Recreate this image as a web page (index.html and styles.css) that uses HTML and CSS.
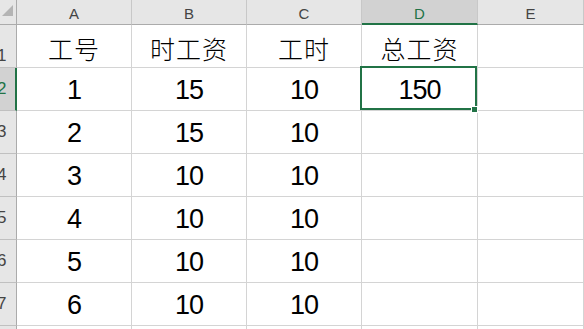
FILE: index.html
```html
<!DOCTYPE html>
<html lang="zh">
<head>
<meta charset="utf-8">
<title>Sheet</title>
<link rel="stylesheet" href="styles.css">
</head>
<body>
<div class="sheet">
  <div class="corner"><span class="tri"></span></div>
  <div class="ch">A</div>
  <div class="ch">B</div>
  <div class="ch">C</div>
  <div class="ch ch-sel">D</div>
  <div class="ch">E</div>

  <div class="rh rh-first"><span>1</span></div>
  <div class="c zh">工号</div>
  <div class="c zh">时工资</div>
  <div class="c zh">工时</div>
  <div class="c zh">总工资</div>
  <div class="c"></div>

  <div class="rh rh-sel"><span>2</span></div>
  <div class="c num">1</div>
  <div class="c num">15</div>
  <div class="c num">10</div>
  <div class="c num active">150<span class="sel"></span><span class="handle"></span></div>
  <div class="c"></div>

  <div class="rh"><span>3</span></div>
  <div class="c num">2</div>
  <div class="c num">15</div>
  <div class="c num">10</div>
  <div class="c"></div>
  <div class="c"></div>

  <div class="rh"><span>4</span></div>
  <div class="c num">3</div>
  <div class="c num">10</div>
  <div class="c num">10</div>
  <div class="c"></div>
  <div class="c"></div>

  <div class="rh"><span>5</span></div>
  <div class="c num">4</div>
  <div class="c num">10</div>
  <div class="c num">10</div>
  <div class="c"></div>
  <div class="c"></div>

  <div class="rh"><span>6</span></div>
  <div class="c num">5</div>
  <div class="c num">10</div>
  <div class="c num">10</div>
  <div class="c"></div>
  <div class="c"></div>

  <div class="rh"><span>7</span></div>
  <div class="c num">6</div>
  <div class="c num">10</div>
  <div class="c num">10</div>
  <div class="c"></div>
  <div class="c"></div>

  <div class="rh"><span>8</span></div>
  <div class="c"></div>
  <div class="c"></div>
  <div class="c"></div>
  <div class="c"></div>
  <div class="c"></div>
</div>
</body>
</html>
```

FILE: styles.css
```css
html, body {
  margin: 0;
  padding: 0;
  background: #ffffff;
  overflow: hidden;
}

.sheet {
  display: grid;
  grid-template-columns: 17px 115px 115px 115px 116px 1fr;
  grid-template-rows: 25px repeat(8, 43px);
  width: 584px;
  font-family: "Liberation Sans", "Noto Sans CJK SC", sans-serif;
  color: #000;
}

.sheet > div {
  box-sizing: border-box;
}

.corner {
  background: #e6e6e6;
  border-right: 1px solid #ababab;
  border-bottom: 1px solid #ababab;
  display: flex;
  align-items: flex-end;
  justify-content: flex-end;
  padding: 0 3px 8px 0;
}

.tri {
  width: 11px;
  height: 11px;
  background: #b4b4b4;
  clip-path: polygon(100% 0, 100% 100%, 0 100%);
}

.ch {
  background: #e6e6e6;
  border-right: 1px solid #c8c8c8;
  border-bottom: 1px solid #ababab;
  display: flex;
  align-items: center;
  justify-content: center;
  padding-top: 3px;
  font-size: 15px;
  color: #444;
}

.ch-sel {
  background: #d2d2d2;
  color: #217346;
  border-bottom: 2px solid #217346;
  padding-top: 4px;
}

.rh {
  background: #e6e6e6;
  border-right: 1px solid #ababab;
  border-bottom: 1px solid #c0c0c0;
  overflow: hidden;
  display: flex;
  align-items: center;
  font-size: 17px;
  color: #444;
}

.rh span {
  margin-left: -3px;
}

.rh-first {
  align-items: flex-end;
  padding-bottom: 1px;
}

.rh-sel {
  background: #d2d2d2;
  color: #217346;
  border-right: 2px solid #217346;
}

.c {
  border-right: 1px solid #d4d4d4;
  border-bottom: 1px solid #d4d4d4;
  display: flex;
  align-items: center;
  justify-content: center;
}

.zh {
  font-family: "Noto Sans CJK SC", sans-serif;
  font-size: 25px;
  font-weight: 300;
  letter-spacing: 1px;
  padding-top: 3px;
}

.num {
  font-size: 27px;
  letter-spacing: -1px;
  padding-top: 3px;
}

.active {
  position: relative;
}

.sel {
  position: absolute;
  top: -2px;
  left: -2px;
  right: 0;
  bottom: 0;
  border: 2px solid #217346;
}

.handle {
  position: absolute;
  right: -1px;
  bottom: -3px;
  width: 5px;
  height: 5px;
  background: #217346;
  border: 1px solid #ffffff;
}
```
